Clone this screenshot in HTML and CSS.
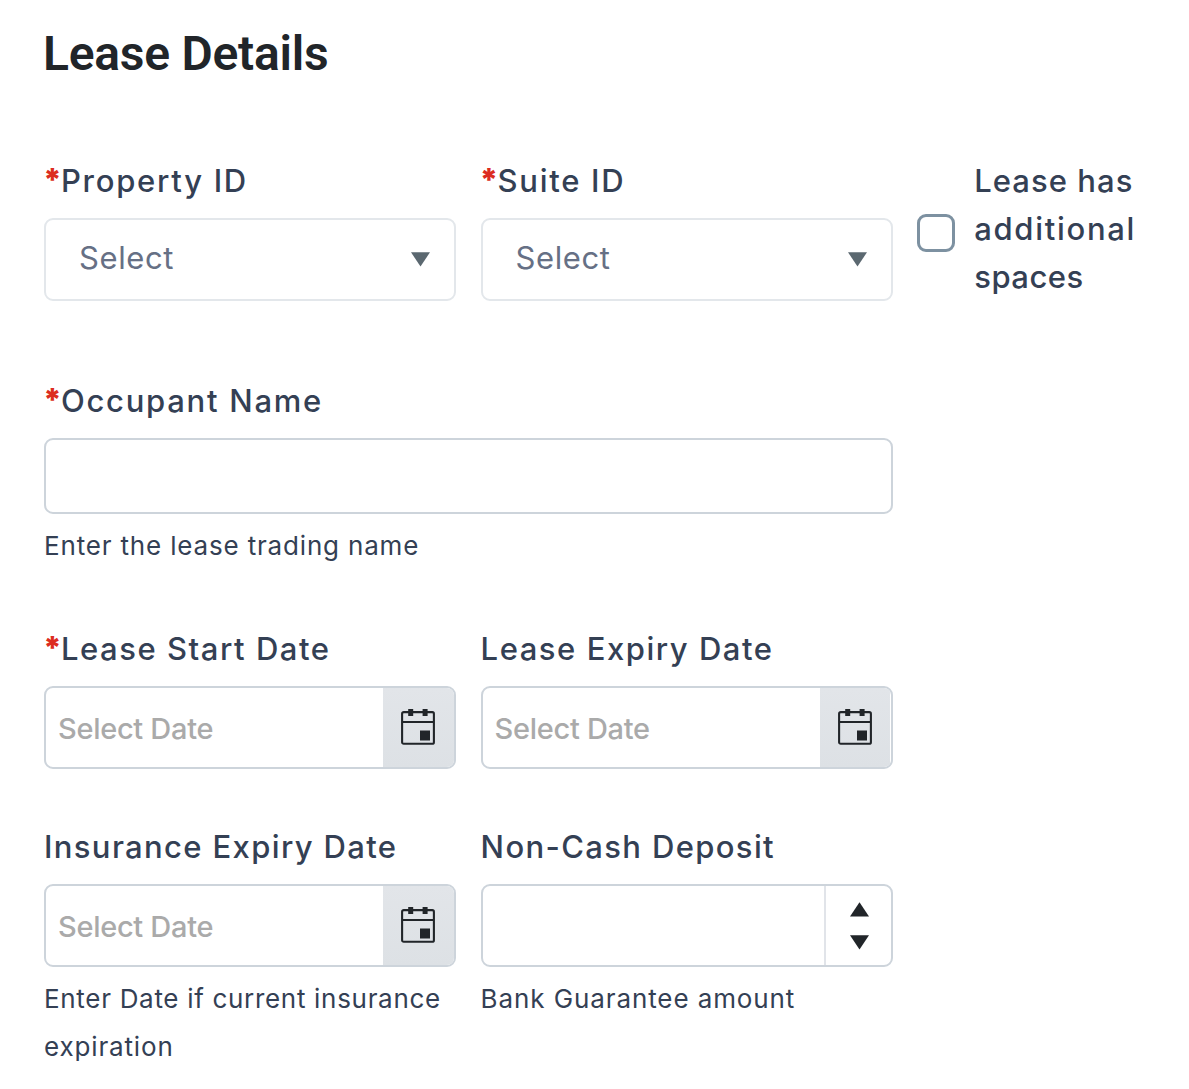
FILE: index.html
```html
<!DOCTYPE html>
<html lang="en">
<head>
<meta charset="utf-8">
<title>Lease Details</title>
<link rel="stylesheet" href="styles.css">
</head>
<body>
<svg class="defs" aria-hidden="true">
  <symbol id="calendar" viewBox="0 0 34 36">
    <rect x="1.1" y="3.1" width="31.8" height="31.7" rx="1.6" fill="none" stroke="#212529" stroke-width="2.1"/>
    <path d="M1 13h32" stroke="#212529" stroke-width="2.1"/>
    <path d="M7.2 0h5v7h-5zM21.6 0h5v7h-5zM19 21.6h10v10H19z" fill="#212529"/>
  </symbol>
  <symbol id="down" viewBox="0 0 19 15"><path d="M0 .3h19L9.500 14.500z" fill="currentColor"/></symbol>
  <symbol id="up" viewBox="0 0 19 15"><path d="M0 14.500h19L9.500 .3z" fill="currentColor"/></symbol>
</svg>
<form class="lease">
  <h1 class="title"><span class="t-title">Lease Details</span></h1>

  <div class="row row-ids">
    <div class="field">
      <div class="label"><span class="star">*</span><span class="t-property">Property ID</span></div>
      <div class="select"><span class="t-select">Select</span><svg class="arrow"><use href="#down"/></svg></div>
    </div>
    <div class="field">
      <div class="label"><span class="star">*</span><span class="t-suite">Suite ID</span></div>
      <div class="select"><span class="t-select">Select</span><svg class="arrow"><use href="#down"/></svg></div>
    </div>
    <label class="check"><span class="box"></span><span class="label check-text"><span class="t-has">Lease has</span> <span class="t-additional">additional</span> <span class="t-spaces">spaces</span></span></label>
  </div>

  <div class="row row-occupant">
    <div class="field wide">
      <div class="label"><span class="star">*</span><span class="t-occupant">Occupant Name</span></div>
      <div class="control text"></div>
      <div class="hint"><span class="t-trading">Enter the lease trading name</span></div>
    </div>
  </div>

  <div class="row row-dates">
    <div class="field">
      <div class="label"><span class="star">*</span><span class="t-start">Lease Start Date</span></div>
      <div class="control"><span class="placeholder">Select Date</span><span class="picker"><svg class="cal"><use href="#calendar"/></svg></span></div>
    </div>
    <div class="field">
      <div class="label"><span class="t-expiry">Lease Expiry Date</span></div>
      <div class="control"><span class="placeholder">Select Date</span><span class="picker"><svg class="cal"><use href="#calendar"/></svg></span></div>
    </div>
  </div>

  <div class="row">
    <div class="field">
      <div class="label"><span class="t-insurance">Insurance Expiry Date</span></div>
      <div class="control"><span class="placeholder">Select Date</span><span class="picker"><svg class="cal"><use href="#calendar"/></svg></span></div>
      <div class="hint"><span class="t-current">Enter Date if current insurance</span><br><span class="t-expiration">expiration</span></div>
    </div>
    <div class="field">
      <div class="label"><span class="t-deposit">Non-Cash Deposit</span></div>
      <div class="control number"><span class="spinner"><svg class="arrow"><use href="#up"/></svg><svg class="arrow"><use href="#down"/></svg></span></div>
      <div class="hint"><span class="t-bank">Bank Guarantee amount</span></div>
    </div>
  </div>
</form>
</body>
</html>
```
FILE: styles.css
```css
* { box-sizing: border-box; }
body { margin: 0; background: #fff; font-family: Inter, sans-serif; color: #344054; }
.defs { display: none; }
.lease { padding: 24px 24px 0 44px; }
.title { margin: 0 0 73px -1px; height: 60px; line-height: 60px; font-family: Roboto, sans-serif; font-size: 48px; font-weight: 600; color: #212529; white-space: nowrap; }
.row { display: grid; grid-template-columns: 412px 412px 1fr; column-gap: 24.600px; }
.row-ids { height: 220px; }
.row-occupant { height: 248px; }
.row-dates { height: 198px; }
.wide { grid-column: span 2; }
.label { display: flex; height: 48px; margin-bottom: 13px; line-height: 48px; font-size: 31px; font-weight: 500; white-space: nowrap; }
.star { width: 18px; margin-left: -1px; flex: none; color: #dc2c20; font-weight: 900; font-size: 31px; line-height: 45px; }
.select { display: flex; align-items: center; justify-content: space-between; height: 83px; padding: 0 24px 0 33px; border: 2px solid #e3e7eb; border-radius: 9px; font-size: 31px; line-height: 48px; color: #667085; }
.select span { margin-top: -4px; }
.select .arrow { color: #5b6870; }
.arrow { display: block; width: 19px; height: 15px; }
.control { display: flex; align-items: stretch; height: 83px; border: 2px solid #cdd4db; border-radius: 9px; overflow: hidden; }
.text { height: 76px; }
.placeholder { flex: 1; padding-left: 12px; line-height: 81px; font-size: 29px; font-weight: 450; letter-spacing: -0.3px; color: #aaa; white-space: nowrap; }
.picker { width: 70.500px; margin-right: 0.500px; padding: 0 0 2px; display: flex; align-items: center; justify-content: center; background: linear-gradient(#e2e5e9, #dde1e5); }
.cal { width: 34px; height: 36px; }
.number { justify-content: flex-end; }
.spinner { width: 67px; display: flex; flex-direction: column; align-items: center; justify-content: center; gap: 18px; padding-left: 3px; border-left: 2px solid #e1e4e9; color: #212529; }
.hint { margin-top: 8px; line-height: 48px; font-size: 26px; white-space: nowrap; }
.check { display: flex; gap: 19px; }
.box { flex: none; width: 38px; height: 38px; margin-top: 56.500px; border: 3px solid #7d91a1; border-radius: 9px; }
.check-text { flex-direction: column; height: 144px; }

/* Tracking per caption */
.t-title { letter-spacing: -0.25px; }
.t-property, .t-suite, .t-occupant { letter-spacing: 1.72px; }
.t-start, .t-expiry { letter-spacing: 1.54px; }
.t-insurance, .t-deposit { letter-spacing: 1.36px; }
.t-select { letter-spacing: 0.6px; }
.t-has { letter-spacing: 1.05px; }
.t-additional { letter-spacing: 1.7px; }
.t-spaces { letter-spacing: 0.5px; }
.t-trading { letter-spacing: 0.83px; }
.t-current { letter-spacing: 0.69px; }
.t-expiration { letter-spacing: 0.85px; }
.t-bank { letter-spacing: 0.9px; }
```
